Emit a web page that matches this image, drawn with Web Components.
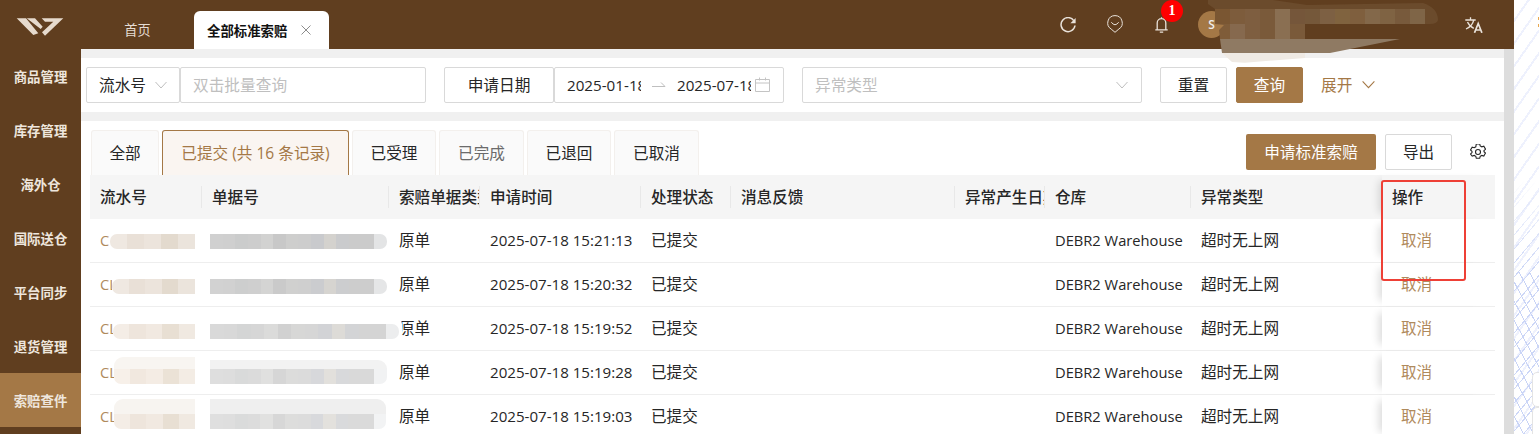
<!DOCTYPE html>
<html><head><meta charset="utf-8">
<style>
html,body{margin:0;padding:0;height:434px;overflow:hidden;background:#fff;font-family:"Open Sans","Noto Sans CJK SC",sans-serif;}
</style></head><body>
<claim-app></claim-app>
<script>
const FONT='"Open Sans","Noto Sans CJK SC",sans-serif';
const chev=(s,c)=>`<svg width="${s}" height="${s}" viewBox="0 0 14 14" fill="none" stroke="${c}" stroke-width="1"><path d="M1.5 4l5.5 6 5.5-6"/></svg>`;
class TopBar extends HTMLElement{connectedCallback(){this.attachShadow({mode:'open'}).innerHTML=`<style>
:host{display:flex;height:49px;background:#603e1f;width:1514px;font-family:${FONT};position:relative}
.logo{width:81px;padding:18px 0 0 16px;box-sizing:border-box}
.logo svg{display:block}
.tabs{display:flex;align-items:flex-end;height:49px}
.home{width:113px;text-align:center;color:#e5dcd3;font-size:13.2px;line-height:19px;padding-bottom:9px;box-sizing:border-box}
.cur{width:135px;height:38px;background:#fff;border-radius:6px 6px 0 0;display:flex;align-items:center;padding-left:13px;box-sizing:border-box;font-size:13.4px;font-weight:700;color:#111;gap:14px}
.cur svg{flex:none}
.right{margin-left:auto;display:flex;align-items:center;height:49px;padding-right:31px}
.ic{display:block;flex:none}
.bell{position:relative;display:flex}
.badge{position:absolute;left:6px;top:-17px;width:22px;height:22px;border-radius:50%;background:#f00;color:#fff;font:700 14px/22px "Liberation Serif",serif;text-align:center}
.av{width:27px;height:27px;border-radius:50%;background:#a47846;color:#eee;font-size:12px;font-weight:600;line-height:27px;text-align:center}
</style>
<div class="logo"><svg width="48" height="18" viewBox="0 0 48 18"><path fill="#e6dacd" d="M.7.3H10L22.300 15.300 17.300 17zM10.700.3H19l7.700 8.400-2 2.300zM25.700.3h21.600L29 17.700l-3-3.400L37.300 3.700H29z"/></svg></div>
<div class="tabs"><div class="home">首页</div><div class="cur"><span>全部标准索赔</span><svg width="10" height="10" viewBox="0 0 10 10" stroke="#8c8c8c" stroke-width="1"><path d="M.5.5l9 9M9.500.5l-9 9"/></svg></div></div>
<div class="right">
<svg class="ic" style="margin-right:31px" width="16" height="16" viewBox="0 0 16 16" fill="none" stroke="#e9e2da" stroke-width="1.500"><path d="M13.800 3.600A7 7 0 1 0 15 8.500"/><path fill="#e9e2da" stroke="none" d="M15.600 1v5.200h-5.200z"/></svg>
<svg class="ic" style="margin-right:32px;margin-bottom:1px" width="16" height="18" viewBox="0 0 16 18" fill="none" stroke="#e9e2da" stroke-width="1"><path d="M8 .6a7.300 7.300 0 0 1 3.800 13.500L8 17.300 4.200 14.100A7.300 7.300 0 0 1 8 .6z"/><path d="M4.300 7.200Q8 12.300 11.700 7.200"/></svg>
<span class="bell" style="margin-right:30px"><svg width="13" height="16" viewBox="0 0 13 16" fill="none" stroke="#e9e2da" stroke-width="1.300"><path d="M.3 12.800h12.400M2.200 12.800V6a4.300 4.300 0 0 1 8.600 0v6.800M4.800 15.200h3.400M6.500 .3v1.400"/></svg><span class="badge">1</span></span>
<span class="av">S</span>
<svg class="ic" style="margin-left:240px" width="18" height="16" viewBox="0 0 18 16" fill="none" stroke="#e9e2da" stroke-width="1.300"><path d="M.3 3h10.400M5.500.3V3M8.800 3C7.800 7 5 10.300 1 12M2.500 5c1.300 3 3.500 5 6.300 6.300"/><path stroke-width="1.700" d="M9.500 15.800l3.700-9.300 3.700 9.300M10.700 13h5"/></svg>
</div>`}}
customElements.define('top-bar',TopBar);

class SideNav extends HTMLElement{connectedCallback(){const items=['商品管理','库存管理','海外仓','国际送仓','平台同步','退货管理','索赔查件'];this.attachShadow({mode:'open'}).innerHTML=`<style>
:host{display:block;width:81px;height:385px;background:#603e1f;font-family:${FONT};flex:none}
.i{height:54px;line-height:52px;padding-top:2px;box-sizing:border-box;text-align:center;color:#eee6dd;font-size:13.4px;font-weight:700}
.a{background:#a47846}
</style>${items.map((t,i)=>`<div class="i${i==6?' a':''}">${t}</div>`).join('')}`;}}
customElements.define('side-nav',SideNav);

class FilterBar extends HTMLElement{connectedCallback(){this.attachShadow({mode:'open'}).innerHTML=`<style>
:host{display:flex;align-items:center;height:54px;background:#fff;padding-left:5px;box-sizing:border-box;font-family:${FONT};font-size:15.7px;color:#262626}
.b{height:36px;border:1px solid #d9d9d9;box-sizing:border-box;display:flex;align-items:center;background:#fff;border-radius:2px;flex:none;padding-bottom:2px}
.ph{color:#bfbfbf}
.sel{width:94px;padding-left:12px;gap:8px}
.sel svg,.ty svg{margin-top:2px}
.in{width:246px;padding-left:12px}
.lab{width:110px;margin-left:18px;justify-content:center}
.date{width:230px;padding-left:12px;font-size:15.2px;padding-bottom:1px}
.date span.d{width:74px;overflow:hidden;white-space:nowrap;display:block;flex:none}
.ty{width:340px;margin-left:18px;padding-left:12px;padding-right:12px;justify-content:space-between}
.reset{width:67px;margin-left:18px;justify-content:center}
.q{width:67px;margin-left:9px;justify-content:center;background:#a47846;border-color:#a47846;color:#fff}
.ex{margin-left:18px;color:#a47846;display:flex;align-items:center;gap:9px;padding-bottom:2px}
</style>
<div class="b sel">流水号${chev(14,'#bfbfbf')}</div><div class="b in ph">双击批量查询</div>
<div class="b lab">申请日期</div><div class="b date"><span class="d">2025-01-18</span><svg style="margin:0 11px" width="14" height="8" viewBox="0 0 14 8" fill="none" stroke="#bfbfbf"><path d="M0 5.500h13L9 1.500"/></svg><span class="d">2025-07-18</span><svg style="margin-left:4px" width="15" height="15" viewBox="0 0 15 15" fill="none" stroke="#c4c4c4"><path d="M.5 2.500h14v12H.5zM.5 6h14M4.500.5v3M10.500.5v3"/></svg></div>
<div class="b ty ph">异常类型${chev(14,'#bfbfbf')}</div>
<div class="b reset">重置</div><div class="b q">查询</div>
<div class="ex">展开${chev(15,'#a47846')}</div>`}}
customElements.define('filter-bar',FilterBar);

class StatusTabs extends HTMLElement{connectedCallback(){const t=[['全部',68],['已提交 (共 16 条记录)',187],['已受理',84],['已完成',85],['已退回',84],['已取消',85]];this.attachShadow({mode:'open'}).innerHTML=`<style>
:host{display:flex;height:45px;padding:9px 18px 0 10px;font-family:${FONT};font-size:15.6px;align-items:flex-end}
.t{height:45px;box-sizing:border-box;background:#fafafa;border:1px solid #f3f0ed;border-bottom:0;border-radius:3px 3px 0 0;display:flex;align-items:center;justify-content:center;margin-right:3px;color:#262626;flex:none;padding-bottom:2px}
.on{background:#faf5f1;border-color:#a47846;color:#a47846}
.g{color:#6b6b6b}
.sp{flex:1}
.btn{height:36px;box-sizing:border-box;display:flex;align-items:center;justify-content:center;border-radius:2px;align-self:flex-start;margin-top:4px;padding-bottom:2px}
.ap{width:130px;background:#a47846;color:#fff}
.ex{width:67px;margin-left:9px;border:1px solid #d9d9d9;color:#262626}
.gear{align-self:flex-start;margin:14px 0 0 18px;flex:none}
</style>${t.map(([n,w],i)=>`<div class="t${i==1?' on':''}${i==3?' g':''}" style="width:${w}px">${n}</div>`).join('')}<span class="sp"></span>
<div class="btn ap">申请标准索赔</div><div class="btn ex">导出</div>
<svg class="gear" width="16" height="16" viewBox="0 0 16 16" fill="none" stroke="#262626" stroke-width="1.100"><path d="M6.300.8h3.400l.5 2 1.600.9 2-.6 1.700 2.900-1.500 1.400v1.200l1.500 1.400-1.700 2.900-2-.6-1.600.9-.5 2H6.300l-.5-2-1.600-.9-2 .6L.5 10.900 2 9.500V8.300L.5 6.900l1.700-2.900 2 .6 1.600-.9z" transform="translate(0 -.9)"/><circle cx="8" cy="8" r="2.500"/></svg>`}}
customElements.define('status-tabs',StatusTabs);

const COLS='112px 187px 91px 161px 90px 224px 90px 146px 191px 113px';
class ClaimTable extends HTMLElement{connectedCallback(){const h=['流水号','单据号','索赔单据类型','申请时间','处理状态','消息反馈','异常产生日期','仓库','异常类型','操作'];
const times=['15:21:13','15:20:32','15:19:52','15:19:28','15:19:03'];
const cell=(c,cls='')=>`<div class="c ${cls}">${c}</div>`;
this.attachShadow({mode:'open'}).innerHTML=`<style>
:host{display:block;width:1405px;margin-left:9px;font-family:${FONT};font-size:15.6px;color:#262626;position:relative}
.r{display:grid;grid-template-columns:${COLS};height:44px;border-bottom:1px solid #eee;box-sizing:border-box}
.h{background:#f5f5f5;border:0;font-weight:500}
.c{padding:0 0 2px 10px;display:flex;align-items:center;white-space:nowrap;overflow:hidden;position:relative}
.h .c::after{content:"";position:absolute;right:0;top:11px;height:22px;width:1px;background:#e8e8e8}
.h .c.ns::after{display:none}
.id{color:#b08a5c;font-size:14.6px}
.dt{font-size:15.1px}
.wh{font-size:14.7px}
.act{color:#b08a5c;padding-left:19px;background:#fff}
.fx{box-shadow:-9px 0 8px -6px rgba(0,0,0,.14);z-index:1;overflow:visible}
.h .fx{background:#f5f5f5}
</style>
<div class="r h">${h.map((t,i)=>cell(t,i==9?'fx ns':'')).join('')}</div>
${times.map(t=>`<div class="r">${cell('CL','id')}${cell('')}${cell('原单')}${cell('2025-07-18 '+t,'dt')}${cell('已提交')}${cell('')}${cell('')}${cell('DEBR2 Warehouse','wh')}${cell('超时无上网')}${cell('取消','act fx')}</div>`).join('')}`}}
customElements.define('claim-table',ClaimTable);

class BlurMask extends HTMLElement{connectedCallback(){
const b=JSON.parse(this.getAttribute('b'));
this.attachShadow({mode:'open'}).innerHTML=`<style>:host{display:contents}
.m{position:absolute;display:flex;overflow:hidden;z-index:5}.m i{display:block;flex:1}</style>`+b.map(([x,y,w,h,cols,r])=>`<div class="m" style="left:${x}px;top:${y}px;width:${w}px;height:${h}px;border-radius:${r||0}">${cols.map(c=>`<i style="background:${c}"></i>`).join('')}</div>`).join('');}}
customElements.define('blur-mask',BlurMask);

class ClaimApp extends HTMLElement{connectedCallback(){
const shade=(arr,d)=>arr.map(c=>{const n=parseInt(c.slice(1),16);const f=v=>Math.min(255,v+d);return `rgb(${f(n>>16)},${f((n>>8)&255)},${f(n&255)})`});
const g=['#d0d0d0','#cfcfcf','#cbcccc','#cdcdcd','#d2d2d1','#c8c8c8','#cececd','#cdcdcd','#c9cacd','#d4d2ce','#cacbcd','#cbcbcb','#cbcbcb','#e3e4e5'];
const o=['#efe8e1','#e9e0d7','#ece4dc','#e3dace','#ebe4dc'];
const white='#fff';
const masks=[
[110,226,88,30,[white],'10px 0 0 10px'],[206,226,186,30,[white],'10px'],
[112,270,86,30,[white],'10px 0 0 10px'],[206,270,186,30,[white],'10px'],
[113,314,87,30,[white],'10px 0 0 10px'],[206,314,196,30,[white],'10px'],
[114,354,86,36,[white],'10px 0 0 10px'],[206,354,186,36,[white],'10px'],
[114,398,86,36,[white],'10px 0 0 10px'],[206,398,186,36,[white],'10px'],
[110,234,85,15,o,'7px 0 0 7px'],[210,234,177,15,g,'0 7px 7px 0'],
[112,279,83,15,shade(o,0),'7px 0 0 7px'],[210,279,177,15,shade(g,2),'0 7px 7px 0'],
[113,324,82,15,shade(o,5),'7px 0 0 7px'],[210,324,189,15,shade(g,9),'0 7px 7px 0'],
[114,357,81,12,['#f8f5f1'],'9px 0 0 0'],[210,360,177,9,['#f2f2f2'],'0 9px 0 0'],
[114,369,81,15,shade(o,8),'0 0 0 7px'],[210,369,177,15,shade(g,14),'0 0 7px 0'],
[114,399,81,15,['#f7f4f0'],'9px 0 0 0'],[210,399,176,15,['#efefef'],'0 9px 0 0'],
[114,414,81,15,shade(o,5),'0 0 0 7px'],[210,414,176,15,shade(g,15),'0 0 7px 0'],
];
const c1=['#7a5632','#7d5c3c','#7e5e40','#7a5a3a','#8a6f52','#75563a','#75583a','#7d6043','#80633f','#7f5f3e','#83684a','#7f6343','#785a3c','#7f6547'];
const c2=['#86694e','#7e5e40','#7a5a3a','#8a6f52','#7a5a3a'];
const rects=(a,y,s)=>a.map((c,i)=>`<rect x="${s+15*i}" y="${y}" width="15" height="15" fill="${c}"/>`).join('');
this.attachShadow({mode:'open'}).innerHTML=`<style>
:host{display:block;position:relative;width:1539px;height:434px;overflow:hidden;background:#fff}
.main{display:flex;width:1514px;height:385px}
.content{flex:1;background:#f0f0f0;padding-top:9px;display:flex;flex-direction:column;gap:9px;min-width:0}
.wrap{width:1423px}
.panel{width:1423px;background:#fff;flex:1;overflow:hidden}
.sb{width:10px;background:#ddd;flex:none}
.strip{position:absolute;left:1514px;top:0;width:25px;height:434px;background:repeating-linear-gradient(125deg,transparent 0 11px,#eef1fd 11px 13px),#fff;overflow:hidden}
.mid{position:absolute;left:0;top:180px;width:25px;height:254px;background:repeating-linear-gradient(130deg,transparent 0 8px,#cdd7f7 8px 9px);-webkit-mask:linear-gradient(transparent,#000 90px)}
.lat{position:absolute;left:0;top:272px;width:25px;height:162px;background:repeating-linear-gradient(62deg,transparent 0 8px,#c9d4f6 8px 9px)}
.card{position:absolute;left:18px;width:12px;background:#fff;border:1px solid #e4e4e4;border-radius:5px;box-sizing:border-box}
.dot{position:absolute;left:24px;width:1px;height:3px;background:#e9a84f}
.redbox{position:absolute;left:1381px;top:180px;width:85px;height:101px;border:2px solid #ee4036;border-radius:3px;box-sizing:border-box;z-index:6}
.smear{position:absolute;z-index:6;left:1190px;top:0;width:260px;height:64px}
</style>
<top-bar></top-bar>
<div class="main"><side-nav></side-nav><div class="content"><filter-bar class="wrap"></filter-bar><div class="panel"><status-tabs></status-tabs><claim-table></claim-table></div></div><div class="sb"></div></div>
<div class="strip"><div class="mid"></div><div class="lat"></div><div class="card" style="top:372px;height:35px"></div><div class="card" style="top:407px;height:40px"></div><div class="dot" style="top:17px"></div><div class="dot" style="top:24px"></div></div>
<blur-mask b='${JSON.stringify(masks)}'></blur-mask>
<svg class="smear" viewBox="0 0 260 64"><path fill="#6b4b2c" d="M18 0H83L117 5 233 3Q248 8 248 20 247 24 240 24H115V25H40V9H25L18 4z"/><path fill="#7f5c39" d="M25 9H40V39H30L29 30 34 25 25 24z"/>${rects(c1,9,25)}${rects(c2,24,40)}<path fill="#8f7a63" d="M30 39H210L140 53H32z"/><path fill="#efeae4" d="M32 53H115V58L55 62.700 42 62z"/></svg>
<div class="redbox"></div>`}}
customElements.define('claim-app',ClaimApp);
</script></body></html>
